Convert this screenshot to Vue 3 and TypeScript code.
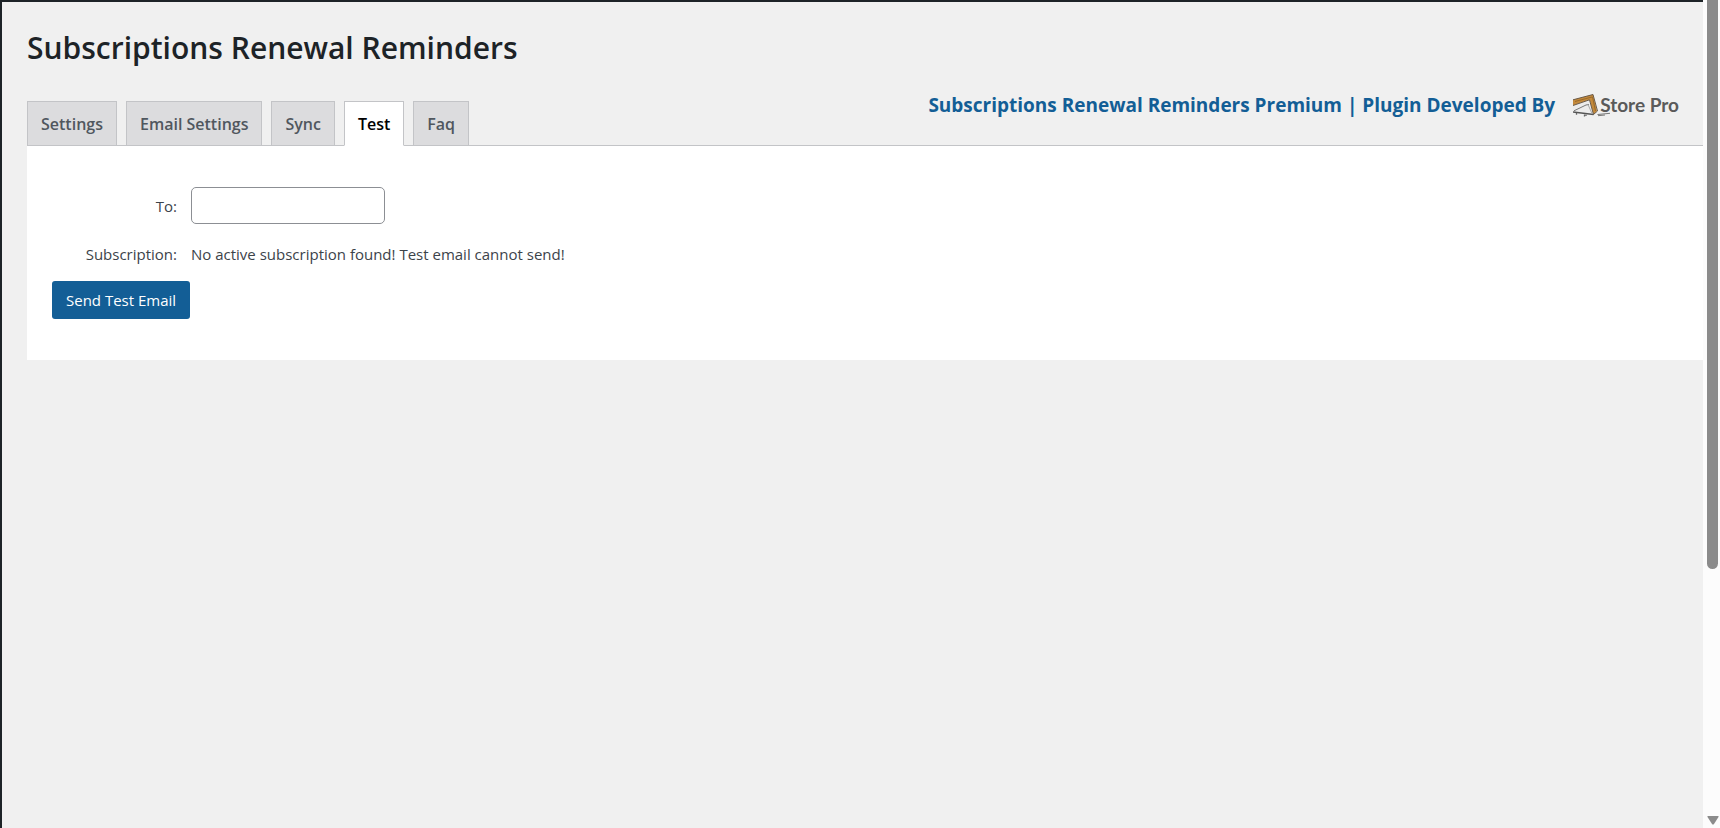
<script setup lang="ts">
import { ref } from 'vue'

const tabs: string[] = ['Settings', 'Email Settings', 'Sync', 'Test', 'Faq']
const activeTab = ref<string>('Test')
const recipient = ref<string>('')
</script>

<template>
  <div class="screen">
    <main class="admin">
      <h1 class="title">Subscriptions Renewal Reminders</h1>

      <header class="bar">
        <nav class="tabs" aria-label="Plugin sections">
          <a
            v-for="tab in tabs"
            :key="tab"
            href="#"
            class="tab"
            :class="{ active: tab === activeTab }"
            @click.prevent="activeTab = tab"
          >{{ tab }}</a>
        </nav>
        <div class="credit">
          <a href="#" class="premium">Subscriptions Renewal Reminders Premium | Plugin Developed By</a>
          <a href="#" class="brand">
            <svg class="mark" viewBox="0 0 38 24" width="38" height="24" aria-hidden="true">
              <path d="M0 6.800 20 1.500 24 18 20.500 21.500 16.500 6.800 0 12.500z" fill="#c48a3c" />
              <path d="M0 12.500 16.500 6.800 20.500 21.500 0 19z" fill="#ececec" />
              <path d="M0 6.800 20 1.500 24.500 18 20.500 21.500 16.500 6.800 0 12.500" fill="none" stroke="#6a5a48" stroke-width="1" />
              <path d="M2 8.500 17 4.500 19.500 4 22.500 18" fill="none" stroke="#9a6a2a" stroke-width="1" />
              <path d="M0 19 20.500 21.500" fill="none" stroke="#555" stroke-width="1.400" />
              <path d="M1 17.800 13 12 16 11.500" fill="none" stroke="#777" stroke-width="1" />
              <path d="M15 11.500 19 20.500" fill="none" stroke="#aaa" stroke-width="1" />
              <path d="M3.500 20v1.800M11.500 21.500v2M13 21.500v1.500" fill="none" stroke="#666" stroke-width="1.300" />
              <path d="M24.500 21.500 37 20.300M25 22.700 32 22" fill="none" stroke="#777" stroke-width="1" />
            </svg>
            <span class="wordmark">Store Pro</span>
          </a>
        </div>
      </header>

      <form class="panel" @submit.prevent>
        <div class="row">
          <label class="label" for="recipient">To:</label>
          <input id="recipient" v-model="recipient" class="field" type="text" />
        </div>
        <div class="row message">
          <span class="label">Subscription:</span>
          <span>No active subscription found! Test email cannot send!</span>
        </div>
        <button class="send" type="submit">Send Test Email</button>
      </form>
    </main>

    <div class="scroll" aria-hidden="true">
      <div class="thumb"></div>
      <svg class="arrow" viewBox="0 0 12 9" width="12" height="9">
        <path d="M1 0h10q1 0 .5 1L7 8q-1 1-2 0L.5 1Q0 0 1 0z" fill="#8b8b8b" />
      </svg>
    </div>
  </div>
</template>

<style>
body {
  margin: 0;
  background: #f0f0f0;
}
</style>

<style scoped>
.screen {
  display: flex;
  height: 100vh;
  box-sizing: border-box;
  font-family: "Open Sans", "Noto Sans", sans-serif;
  font-size: 15px;
  color: #3c434a;
}
.admin {
  flex: 1;
  min-width: 0;
  box-sizing: border-box;
  padding-left: 25px;
  border-top: 2px solid #1d2327;
  border-left: 2px solid #1d2327;
  background: #f0f0f0;
}
.title {
  margin: 0;
  padding-top: 24px;
  font-size: 30px;
  line-height: 44px;
  font-weight: 600;
  color: #1d2327;
}
.bar {
  display: flex;
  justify-content: space-between;
  align-items: flex-end;
  margin-top: 21px;
  border-bottom: 1px solid #c3c4c7;
}
.tabs {
  display: flex;
  gap: 9px;
  margin-bottom: -1px;
}
.tab {
  padding: 9px 13px 7px;
  border: 1px solid #c3c4c7;
  background: #dcdcde;
  color: #50575e;
  font-size: 16px;
  line-height: 27px;
  font-weight: 600;
  text-decoration: none;
}
.tab.active {
  background: #fff;
  border-bottom-color: #fff;
  color: #000;
}
.credit {
  display: flex;
  align-items: center;
  gap: 18px;
  padding-right: 24px;
  margin-bottom: 26px;
}
.premium {
  color: #135e96;
  font-size: 19px;
  line-height: 28px;
  font-weight: 700;
  text-decoration: none;
}
.brand {
  display: flex;
  align-items: center;
  text-decoration: none;
}
.mark {
  margin-right: -11px;
}
.wordmark {
  color: #5a5a5a;
  font-family: Lato, sans-serif;
  font-size: 19px;
  line-height: 24px;
  font-weight: 700;
}
.panel {
  padding: 41px 25px;
  background: #fff;
}
.row {
  display: flex;
  align-items: center;
  gap: 14px;
}
.label {
  width: 125px;
  text-align: right;
}
.field {
  box-sizing: border-box;
  width: 194px;
  height: 37px;
  padding: 0 10px;
  border: 1px solid #8c8f94;
  border-radius: 5px;
  background: #fff;
  color: inherit;
  font: inherit;
}
.message {
  margin: 18px 0 15px;
  line-height: 24px;
}
.send {
  padding: 0 14px;
  height: 38px;
  border: 0;
  border-radius: 3px;
  background: #135e96;
  color: #fff;
  font: inherit;
}
.scroll {
  display: flex;
  flex-direction: column;
  justify-content: space-between;
  align-items: center;
  box-sizing: border-box;
  width: 17px;
  padding: 0 1px 3px 3px;
  background: #fcfcfc;
}
.thumb {
  width: 11px;
  height: 69%;
  border-radius: 0 0 6px 6px;
  background: #8b8b8b;
}
</style>
